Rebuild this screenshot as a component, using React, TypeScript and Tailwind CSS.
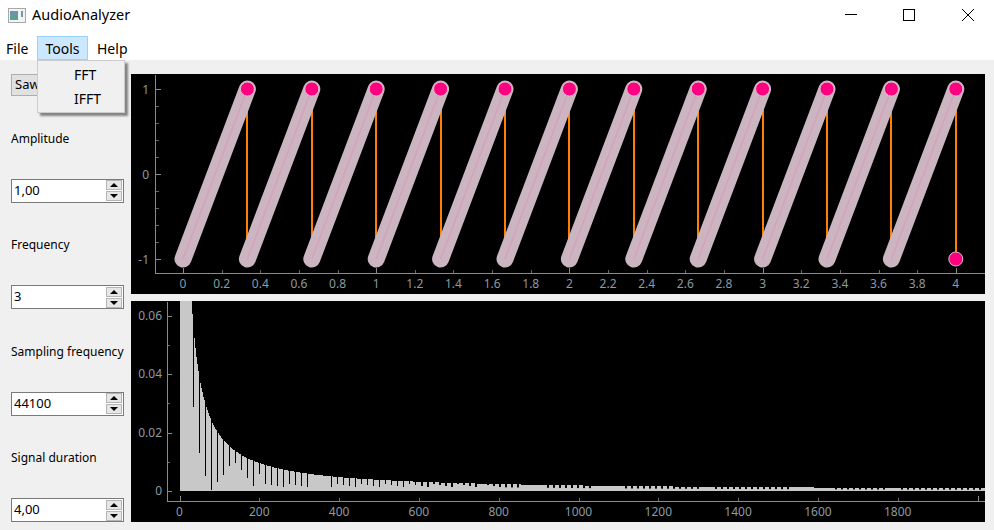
const controls = [
  { label: 'Amplitude', value: '1,00' },
  { label: 'Frequency', value: '3' },
  { label: 'Sampling frequency', value: '44100' },
  { label: 'Signal duration', value: '4,00' },
];

const axisColor = '#8a8a8a';
const labelColor = '#8b9aa3';

// top plot: time axis
const timeX = (t: number) => 183 + t * 193.2;
const levelY = (v: number) => 174 - v * 85;
const timeTicks = Array.from({ length: 21 }, (_, i) => i / 5);
const periods = Array.from({ length: 12 }, (_, i) => i);

// bottom plot: spectrum
const freqX = (f: number) => 179.5 + f * 0.399;
const ampY = (a: number) => 491 - (a / 0.02) * 58.5;
const freqTicks = Array.from({ length: 11 }, (_, i) => i * 200);

function topAt(x: number) {
  const f = (x - 179.5) / 0.399;
  return ampY(Math.min(0.066, 1.9 / Math.max(f, 1)));
}

function spectrumPath() {
  let d = 'M180 491';
  for (let x = 180; x <= 985; x += 1) {
    const y = Math.round(topAt(x));
    d += ` L${x} ${y} L${x + 1} ${y}`;
  }
  return d + ' L985 491 Z';
}

// the dark notches in the spectrum come every 6px
const earlyNotches = [407, 453, 476, 490, 482, 475, 466, 463, 470, 478, 486, 474];
const merged = [[309, 328], [523, 541], [590, 620], [700, 712], [790, 830], [885, 900]];

function notches() {
  const out: { x: number; y1: number; y2: number; w: number }[] = [];
  for (let x = 193, i = 0; x < 985; x += 6, i++) {
    if (merged.some(([a, b]) => x >= a && x <= b)) continue;
    const y1 = topAt(x) - 1;
    const far = x > 500;
    let y2 = far ? y1 + 1 + (491 - y1) * 0.4 : 484 + (i % 4);
    if (i < earlyNotches.length) y2 = earlyNotches[i];
    out.push({ x, y1, y2, w: x > 420 ? 2 : 1 });
  }
  return out;
}

function SpinBox({ value }: { value: string }) {
  return (
    <div className="flex h-6 w-[113px] items-center border border-[#7a7a7a] bg-white pl-[2px] pr-[1px] text-[13px] text-black">
      <span className="flex-1">{value}</span>
      <div className="flex w-[16px] flex-col gap-[1px]">
        <div className="flex h-[10px] items-center justify-center border border-[#b5b5b5] bg-[#e6e6e6]">
          <div className="h-0 w-0 border-x-[4px] border-b-[4px] border-x-transparent border-b-black" />
        </div>
        <div className="flex h-[10px] items-center justify-center border border-[#b5b5b5] bg-[#e6e6e6]">
          <div className="h-0 w-0 border-x-[4px] border-t-[4px] border-x-transparent border-t-black" />
        </div>
      </div>
    </div>
  );
}

function SignalPlot() {
  return (
    <svg viewBox="131 74 854 220" className="block h-[220px] w-[854px] bg-black text-[12px]">
      <line x1="155.5" y1="75" x2="155.5" y2="273.5" stroke={axisColor} />
      <line x1="155" y1="273.5" x2="985" y2="273.5" stroke={axisColor} />
      {timeTicks.map((t, i) => (
        <g key={t}>
          <line
            x1={Math.round(timeX(t)) + 0.5}
            x2={Math.round(timeX(t)) + 0.5}
            y1={i % 5 === 0 ? 268 : 270}
            y2="273"
            stroke={i % 5 === 0 ? axisColor : '#666'}
          />
          <text x={timeX(t)} y="288" textAnchor="middle" fill={labelColor}>
            {Number.isInteger(t) ? t : t.toFixed(1)}
          </text>
        </g>
      ))}
      {Array.from({ length: 11 }, (_, i) => 1 - i * 0.2).map((v, i) => (
        <line
          key={i}
          x1="156"
          x2={i % 5 === 0 ? 161 : 159}
          y1={Math.round(levelY(v)) + 0.5}
          y2={Math.round(levelY(v)) + 0.5}
          stroke={i % 5 === 0 ? axisColor : '#666'}
        />
      ))}
      {[1, 0, -1].map((v) => (
        <text key={v} x="149" y={levelY(v) + 4.5} textAnchor="end" fill={labelColor}>
          {v}
        </text>
      ))}

      {periods.map((p) => {
        const x = Math.round(timeX((p + 1) / 3));
        return <line key={p} x1={x} x2={x} y1="89" y2="259" stroke="#ff8000" strokeWidth="2" />;
      })}
      {periods.map((p) => {
        const x1 = timeX(p / 3);
        const x2 = timeX((p + 1) / 3);
        return (
          <g key={p}>
            <line x1={x1} y1="259" x2={x2} y2="89" stroke="#cab5c1" strokeWidth="17" strokeLinecap="round" />
            <line x1={x1} y1="259" x2={x2} y2="89" stroke="#d8a0bd" strokeWidth="1.5" />
          </g>
        );
      })}
      {periods.map((p) => (
        <circle key={p} cx={timeX((p + 1) / 3)} cy="89" r="7" fill="#ff0080" stroke="#dcbccc" />
      ))}
      <circle cx={timeX(4)} cy="259" r="7" fill="#ff0080" stroke="#dcbccc" />
    </svg>
  );
}

function SpectrumPlot() {
  return (
    <svg viewBox="131 301 854 221" className="block h-[221px] w-[854px] bg-black text-[12px]">
      <path d={spectrumPath()} fill="#c8c8c8" />
      {notches().map((n) => (
        <rect key={n.x} x={n.x} y={n.y1} width={n.w} height={n.y2 - n.y1} fill="#000" />
      ))}
      <line x1="167.5" y1="302" x2="167.5" y2="501.5" stroke={axisColor} />
      <line x1="167" y1="501.5" x2="985" y2="501.5" stroke={axisColor} />
      {freqTicks.map((f, i) => {
        const long = f === 0 || f === 2000;
        return (
          <g key={f}>
            <line
              x1={Math.round(freqX(f)) + 0.5}
              x2={Math.round(freqX(f)) + 0.5}
              y1={long ? 496 : 498}
              y2="501"
              stroke={long ? axisColor : '#666'}
            />
            {i < 10 && (
              <text x={freqX(f)} y="516" textAnchor="middle" fill={labelColor}>
                {f}
              </text>
            )}
          </g>
        );
      })}
      {[0, 0.01, 0.02, 0.03, 0.04, 0.05, 0.06].map((a, i) => (
        <line
          key={a}
          x1="168"
          x2={i % 2 === 0 ? 172 : 170}
          y1={Math.round(ampY(a)) + 0.5}
          y2={Math.round(ampY(a)) + 0.5}
          stroke={i % 2 === 0 ? axisColor : '#666'}
        />
      ))}
      {[0, 0.02, 0.04, 0.06].map((a) => (
        <text key={a} x="162" y={ampY(a) + 4} textAnchor="end" fill={labelColor}>
          {a === 0 ? '0' : a.toFixed(2)}
        </text>
      ))}
    </svg>
  );
}

export default function App() {
  return (
    <div className="relative flex h-[530px] w-[994px] flex-col overflow-hidden bg-[#f0f0f0] font-['Noto_Sans',sans-serif] text-black">
      {/* title bar */}
      <div className="flex h-[30px] items-center bg-white pl-2 text-[14px]">
        <svg width="18" height="15" viewBox="0 0 18 15" className="mr-[6px]">
          <rect x="0.5" y="0.5" width="17" height="14" fill="#f2f3f2" stroke="#a8a8a8" />
          <rect x="2" y="3" width="8" height="9" fill="#5c9f94" />
          <rect x="2" y="3" width="8" height="4" fill="#6b95ab" />
          <rect x="13" y="3" width="2" height="6" fill="#6d9da0" />
        </svg>
        <span className="text-[14.5px]">AudioAnalyzer</span>
        <div className="ml-auto flex items-center">
          <svg width="12" height="12" viewBox="0 0 12 12" className="mr-[46px]">
            <line x1="0" y1="5.5" x2="12" y2="5.5" stroke="#000" />
          </svg>
          <svg width="12" height="12" viewBox="0 0 12 12" className="mr-[47px]">
            <rect x="0.5" y="0.5" width="11" height="11" fill="none" stroke="#000" />
          </svg>
          <svg width="12" height="12" viewBox="0 0 12 12" className="mr-[20px]">
            <path d="M0 0 L12 12 M12 0 L0 12" stroke="#000" fill="none" />
          </svg>
        </div>
      </div>

      {/* menu bar */}
      <div className="flex h-[30px] items-stretch bg-white pt-[6px] text-[14px]">
        <div className="flex w-[37px] items-center pl-[6px]">File</div>
        <div className="flex w-[51px] items-center justify-center border border-[#99d1ff] bg-[#cce8ff]">Tools</div>
        <div className="flex items-center pl-[9px]">Help</div>
      </div>

      <div className="flex flex-1 pl-[11px] pt-[14px]">
        {/* controls */}
        <div className="flex h-[448px] w-[120px] flex-col text-[12px]">
          <button className="h-[22px] w-[113px] border border-[#adadad] bg-[#e1e1e1] pl-[3px] text-left text-[13px]">
            Sawtooth
          </button>
          <div className="flex flex-1 flex-col">
            {controls.map((c) => (
              <div key={c.label} className="flex flex-1 flex-col justify-end">
                <div className="mb-[30px] h-5 leading-5">{c.label}</div>
                <SpinBox value={c.value} />
              </div>
            ))}
          </div>
        </div>

        {/* plots */}
        <div className="flex flex-col gap-[7px]">
          <SignalPlot />
          <SpectrumPlot />
        </div>
      </div>

      {/* open Tools menu */}
      <div className="absolute left-[37px] top-[60px] flex h-[53px] w-[88px] flex-col border border-[#cccccc] bg-[#f0f0f0] py-[2px] pl-[36px] text-[14px] shadow-[3px_3px_2px_rgba(0,0,0,0.45)]">
        <div className="flex h-6 items-center">FFT</div>
        <div className="flex h-6 items-center">IFFT</div>
      </div>
    </div>
  );
}
